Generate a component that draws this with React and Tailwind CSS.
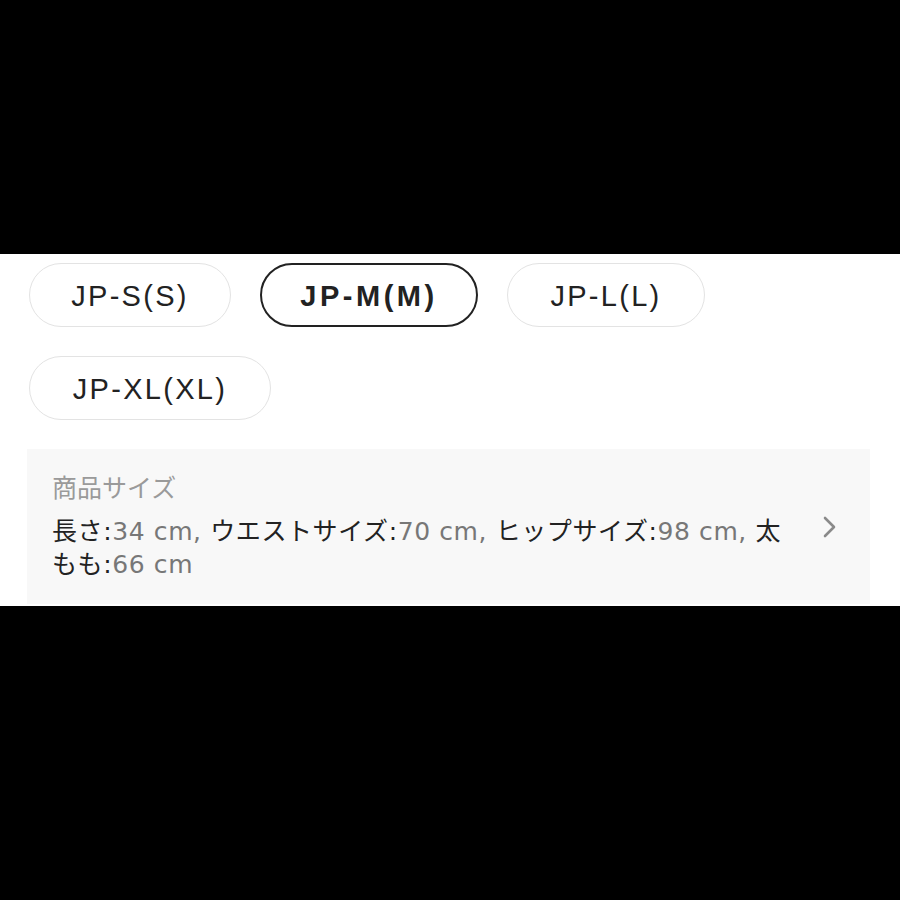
import React from "react";

const sizes = [
  { label: "JP-S(S)", w: "w-[202px]", selected: false },
  { label: "JP-M(M)", w: "w-[218px]", selected: true },
  { label: "JP-L(L)", w: "w-[198px]", selected: false },
  { label: "JP-XL(XL)", w: "w-[242px]", selected: false },
];

function Pill({ label, w, selected }) {
  return (
    <div
      className={
        selected
          ? `${w} h-[64px] pt-[3px] rounded-full border-2 border-[#222222] flex items-center justify-center text-[29px] font-semibold tracking-[3.5px] text-[#222222]`
          : `${w} h-[64px] pt-[3px] rounded-full border-[1.5px] border-[#e3e3e3] flex items-center justify-center text-[29px] tracking-[2.3px] text-[#222222]`
      }
    >
      {label}
    </div>
  );
}

export default function App() {
  return (
    <div
      className="w-[900px] h-[900px] bg-black flex flex-col"
      style={{ fontFamily: '"Liberation Sans", "Noto Sans CJK JP", sans-serif' }}
    >
      <div className="h-[254px] shrink-0" />
      <div className="h-[352px] shrink-0 bg-white flex flex-col pt-[9px]">
        <div className="flex flex-wrap gap-[29px] pl-[29px] w-[760px]">
          {sizes.map((s) => (
            <Pill key={s.label} {...s} />
          ))}
        </div>
        <div className="mt-[29px] ml-[27px] w-[843px] h-[155px] bg-[#f8f8f8] flex items-center pl-[25px] pr-[30px]">
          <div
            className="flex-1 flex flex-col"
            style={{ fontFamily: '"DejaVu Sans", "Noto Sans CJK JP", sans-serif' }}
          >
            <div className="text-[25px] leading-[32px] text-[#9a9a9a]">商品サイズ</div>
            <div className="mt-[10px] w-[742px] text-[25px] leading-[33px] tracking-[0.6px] text-[#777777]">
              <span className="text-[#222222]">長さ:</span>34 cm,{" "}
              <span className="text-[#222222]">ウエストサイズ:</span>70 cm,{" "}
              <span className="text-[#222222]">ヒップサイズ:</span>98 cm,{" "}
              <span className="text-[#222222]">太もも:</span>66 cm
            </div>
          </div>
          <svg width="16" height="22" viewBox="0 0 16 22" className="shrink-0 mr-[2px]">
            <path d="M3 2 L12 11 L3 20" fill="none" stroke="#8a8a8a" strokeWidth="2.6" strokeLinecap="round" strokeLinejoin="round" />
          </svg>
        </div>
      </div>
    </div>
  );
}
